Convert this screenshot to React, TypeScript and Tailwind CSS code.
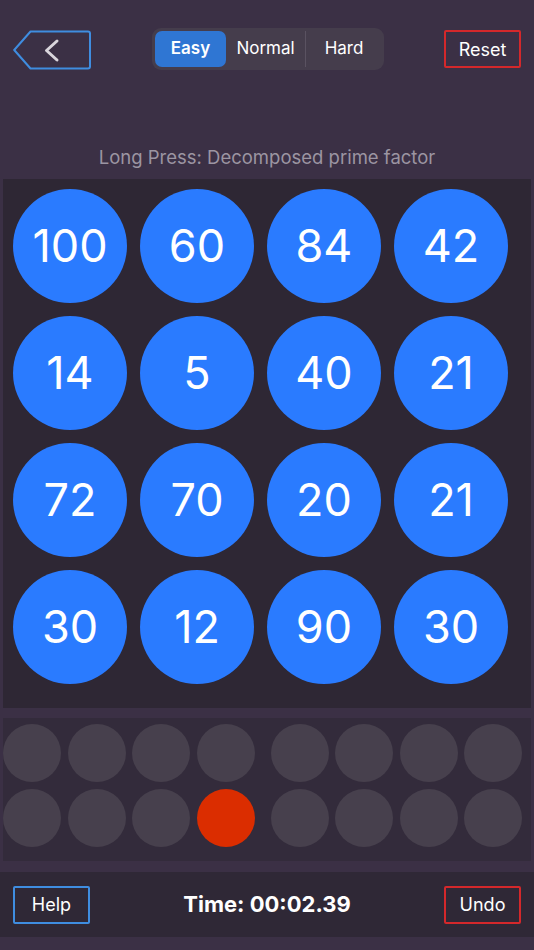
import React from 'react';

const big = [100, 60, 84, 42, 14, 5, 40, 21, 72, 70, 20, 21, 30, 12, 90, 30];

function Slot({ active }: { active?: boolean }) {
  return <div className={`w-[58px] h-[58px] rounded-full ${active ? 'bg-[#db2d00]' : 'bg-[#47404d]'}`} />;
}

export default function App() {
  return (
    <div className="w-[534px] h-[950px] bg-[#3b3045] flex flex-col overflow-hidden" style={{ fontFamily: 'Inter, "Noto Sans", sans-serif' }}>
      {/* top bar */}
      <div className="mt-[28px] h-[42px] pl-[13px] pr-[13px] flex items-center justify-between">
        <svg width="78" height="40" viewBox="0 0 78 40" className="mt-[1px]">
          <path d="M17.5 1.5 H75 a2 2 0 0 1 2 2 V36.5 a2 2 0 0 1 -2 2 H17.5 L1.2 20 Z" fill="none" stroke="#3f8de0" strokeWidth="2" strokeLinejoin="round" />
          <path d="M44 11 L33.5 20.5 L44 30" fill="none" stroke="#d9d5dc" strokeWidth="3" strokeLinecap="round" strokeLinejoin="round" />
        </svg>
        <div className="h-[42px] rounded-[9px] bg-[#453d4c] flex items-center pl-[3px] pr-[2px] ml-[1px]">
          <div className="w-[71px] h-[36px] rounded-[7px] bg-[#2f76d3] flex items-center justify-center text-white text-[17px] font-semibold">Easy</div>
          <div className="w-[80px] h-[36px] flex items-center justify-center text-white text-[17px] border-r border-[#5a5261]">Normal</div>
          <div className="w-[76px] h-[36px] flex items-center justify-center text-white text-[17px]">Hard</div>
        </div>
        <button className="w-[77px] h-[38px] border-2 border-[#d4282b] rounded-[2px] text-white text-[18px] flex items-center justify-center">Reset</button>
      </div>

      {/* hint */}
      <div className="mt-[76px] h-[22px] text-center text-[18.5px] leading-[22px] text-[#9c95a2]">Long Press: Decomposed prime factor</div>

      {/* number grid */}
      <div className="mt-[11px] mx-[3px] h-[529px] bg-[#2e2734] pl-[10px] pt-[10px]">
        <div className="grid grid-cols-[repeat(4,114px)] gap-[13px]">
          {big.map((n, i) => (
            <div key={i} className="w-[114px] h-[114px] rounded-full bg-[#2a7bff] flex items-center justify-center text-white text-[45px] leading-none pb-[1px]">
              {n}
            </div>
          ))}
        </div>
      </div>

      {/* slots */}
      <div className="mt-[10px] mx-[3px] h-[143px] bg-[#332b3b] pt-[6px] flex flex-col gap-[7px]">
        {[0, 1].map(r => (
          <div key={r} className="flex gap-[16px]">
            <div className="flex gap-[6.5px]">
              {[0, 1, 2, 3].map(c => <Slot key={c} active={r === 1 && c === 3} />)}
            </div>
            <div className="flex gap-[6.5px]">
              {[0, 1, 2, 3].map(c => <Slot key={c} />)}
            </div>
          </div>
        ))}
      </div>

      {/* footer */}
      <div className="mt-[11px] h-[65px] bg-[#2f2836] px-[13px] flex items-center justify-between">
        <button className="w-[77px] h-[38px] border-2 border-[#3f8de0] rounded-[2px] text-white text-[18px] flex items-center justify-center">Help</button>
        <div className="text-white text-[22px] font-bold">Time: 00:02.39</div>
        <button className="w-[77px] h-[38px] border-2 border-[#d4282b] rounded-[2px] text-white text-[18px] flex items-center justify-center">Undo</button>
      </div>
    </div>
  );
}
